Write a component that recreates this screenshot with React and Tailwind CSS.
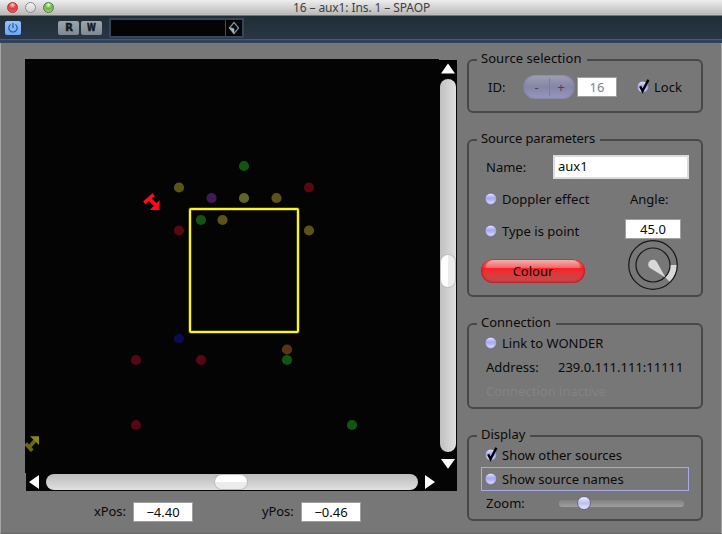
import React from 'react';

const SOURCES = [
  [244, 166, '#115511'], [179, 187.5, '#5a5416'], [309, 187.5, '#560a0c'],
  [211.5, 198, '#421a58'], [244, 198, '#606428'], [276.5, 198, '#5a5416'],
  [201, 220, '#115511'], [222.5, 220, '#5a5416'], [179, 230.5, '#560a0c'],
  [309, 230.5, '#5a5416'], [179, 338.5, '#080c50'], [287, 349.5, '#5c3412'],
  [136, 360, '#560810'], [201, 360, '#560810'], [287, 360, '#115511'],
  [136, 425, '#560810'], [352, 425, '#115511'],
];

function TitleBar() {
  return (
    <div className="flex h-4 shrink-0 bg-linear-to-b from-[#eeeeee] to-[#b8b8b8] border-b border-[#70767a]">
      <div className="flex w-[200px] gap-[7px] pl-[7px] pt-[2px]">
        <span className="h-[11px] w-[11px] rounded-full border border-[#a83838] bg-[radial-gradient(circle_at_50%_20%,#ffd0d0_0%,#e23a3a_45%,#ee6a6a_100%)]" />
        <span className="h-[11px] w-[11px] rounded-full border border-[#8c8c8c] bg-linear-to-b from-[#f2f2f2] to-[#d0d0d0]" />
        <span className="h-[11px] w-[11px] rounded-full border border-[#4c8038] bg-[radial-gradient(circle_at_50%_20%,#e4ffd0_0%,#6cb048_45%,#a8e080_100%)]" />
      </div>
      <div className="w-[323px] text-center text-[12px] leading-[16px] text-[#404040] tracking-[-0.1px]">
        16 – aux1: Ins. 1 – SPAOP
      </div>
    </div>
  );
}

function Toolbar() {
  return (
    <div className="flex h-[27px] shrink-0 items-center border-b-[3px] border-[#30435a] bg-linear-to-b from-[#202e36] to-[#283747] pl-[5px] shadow-[inset_0_-1px_0_#4a5a66]">
      <div className="flex h-[14px] w-4 items-center justify-center rounded-[2px] bg-linear-to-b from-[#94c2ff] to-[#6ea6f4]">
        <svg width="12" height="12" viewBox="0 0 12 12" fill="none" stroke="#234f86" strokeWidth="1.1">
          <path d="M6 1v5M3.6 2.4a4.2 4.2 0 1 0 4.8 0" />
        </svg>
      </div>
      <div className="ml-[37px] flex gap-[2px] font-['DejaVu_Sans'] text-[10px] font-bold leading-[14px] text-[#15191d]">
        <span className="flex h-[14px] w-[21px] items-center justify-center rounded-[2px] bg-linear-to-b from-[#9ca5ae] to-[#7e8994] pl-px [-webkit-text-stroke:0.5px_#15191d]">R</span>
        <span className="flex h-[14px] w-[21px] items-center justify-center rounded-[2px] bg-linear-to-b from-[#9ca5ae] to-[#7e8994]">
          <span className="inline-block scale-x-[0.8] [-webkit-text-stroke:0.5px_#15191d]">W</span>
        </span>
      </div>
      <div className="ml-[7px] flex h-5 w-[135px] border-2 border-[#34475a] bg-[#040404]">
        <div className="w-[115px] border-r border-[#3b4d55]" />
        <svg width="16" height="16" viewBox="0 0 16 16">
          <path d="M8 2.5l4.6 5.5L8 13.5 3.4 8z" fill="none" stroke="#7d929c" strokeWidth="1.2" />
          <path d="M3.4 7.4L8 8.8v4.7z" fill="#a2b7c1" stroke="#a2b7c1" strokeWidth="0.6" />
        </svg>
      </div>
    </div>
  );
}

function Stage() {
  return (
    <svg width="414" height="414" viewBox="25 59 414 414" className="block bg-[#040404]">
      {SOURCES.map(([x, y, c]) => (
        <circle key={x + '-' + y} cx={x} cy={y} r="5.1" fill={c} />
      ))}
      <rect x="190" y="209" width="108" height="123" rx="1" fill="none" stroke="#504e10" strokeWidth="3.4" />
      <rect x="190" y="209" width="108" height="123" rx="1" fill="none" stroke="#fbf42c" strokeWidth="2" />
      <g fill="#ff0c18" stroke="#ff0c18">
        <path d="M144.4 202.8L153.6 194.6M148.8 198.2L156 205.4" strokeWidth="3.8" />
        <path d="M159.5 200V210H149.8z" stroke="none" />
      </g>
      <g fill="#8c8618" stroke="#6c6714">
        <path d="M25.6 443.6L32.3 450.8M29.2 447.2L35.5 440" strokeWidth="3.7" />
        <path d="M30 436.2H39V445z" stroke="none" />
      </g>
    </svg>
  );
}

function VerticalScroll() {
  return (
    <div className="mt-px flex h-[413px] w-[18px] flex-col items-center bg-[#040404]">
      <svg width="18" height="19" viewBox="0 0 18 19" className="shrink-0"><path d="M9 3.5L16 13.5H2z" fill="#fff" /></svg>
      <div className="h-[373px] w-4 rounded-full bg-linear-to-r from-[#c0c0c0] to-[#e0e0e0] pl-px pt-[176px]">
        <div className="h-8 w-[14px] rounded-full bg-linear-to-r from-white from-50% to-[#ececec] to-50% ring-1 ring-[#bcbcbc]" />
      </div>
      <svg width="18" height="20" viewBox="0 0 18 20" className="shrink-0"><path d="M2 7H16L9 16.8z" fill="#fff" /></svg>
    </div>
  );
}

function HorizontalScroll() {
  return (
    <div className="ml-px flex h-[18px] w-[431px] items-center bg-[#040404]">
      <svg width="20" height="18" viewBox="0 0 20 18"><path d="M3 9L13 2V16z" fill="#fff" /></svg>
      <div className="h-4 w-[372px] rounded-full bg-linear-to-b from-[#bcbcbc] to-[#e0e0e0] pl-[169px] pt-px">
        <div className="h-[14px] w-8 rounded-full bg-linear-to-b from-white from-50% to-[#ececec] to-50% ring-1 ring-[#bcbcbc]" />
      </div>
      <svg width="39" height="18" viewBox="0 0 39 18"><path d="M7 2L17 9L7 16z" fill="#fff" /></svg>
    </div>
  );
}

function Group({ title, className, titleClass = '', children }) {
  return (
    <section className={'w-[236px] shrink-0 rounded-[6px] border-2 border-[#484848] ' + className}>
      <div className={'-mt-[12px] ml-2 h-[19px] w-fit bg-[#777777] pl-[4px] pr-[5px] leading-[18px] ' + titleClass}>{title}</div>
      {children}
    </section>
  );
}

function Tick({ checked }) {
  return (
    <svg width="12" height="16" viewBox="0 0 12 16" className="shrink-0 overflow-visible">
      <defs>
        <linearGradient id="led" x1="0" y1="0" x2="0" y2="1">
          <stop offset="0" stopColor="#e4e4ff" />
          <stop offset="0.45" stopColor="#a6a6f2" />
          <stop offset="1" stopColor="#dcdcff" />
        </linearGradient>
      </defs>
      <circle cx="5.8" cy="7.8" r="5.6" fill="url(#led)" stroke="#68687e" strokeWidth="0.6" />
      {checked && <path d="M3.2 7.2L5.6 12L11.4 0.8" fill="none" stroke="#000" strokeWidth="2.4" />}
    </svg>
  );
}

function Field({ className, children }) {
  return (
    <div className={'flex h-5 justify-center border border-[#a0a0a0] bg-white ' + className}>{children}</div>
  );
}

function Dial() {
  return (
    <svg width="52" height="52" viewBox="0 0 52 52">
      <path d="M50 26A24 24 0 0 1 42.97 42.97L38 38A17 17 0 0 0 43 26z" fill="#d8d8d8" />
      <circle cx="26" cy="26" r="24.3" fill="none" stroke="#171717" strokeWidth="1.2" />
      <circle cx="26" cy="26" r="17" fill="none" stroke="#171717" strokeWidth="1.2" />
      <path d="M22.6 28.8A4.7 4.7 0 1 1 30 23.2L38.5 38.5z" fill="#d8d8d8" />
    </svg>
  );
}

export default function App() {
  return (
    <div className="flex h-[534px] w-[722px] flex-col overflow-hidden bg-[#777777] font-['Noto_Sans','Open_Sans',sans-serif] text-[13px] leading-[18px] whitespace-nowrap text-[#0a0a0a]">
      <TitleBar />
      <Toolbar />
      <main className="flex grow border-x border-l-[#a4a4a4] border-r-[#a4a4a4] border-b border-b-[#666666]">
        <div className="ml-6 w-[432px] shrink-0 pt-4">
          <div className="flex"><Stage /><VerticalScroll /></div>
          <HorizontalScroll />
          <div className="flex pt-[11px]">
            <span className="ml-[69px] w-[39px] tracking-[-0.1px]">xPos:</span>
            <Field className="w-[60px]">−4.40</Field>
            <span className="ml-[69px] w-[39px] tracking-[-0.1px]">yPos:</span>
            <Field className="w-[60px]">−0.46</Field>
          </div>
        </div>

        <div className="ml-[10px] pt-4">
          <Group title="Source selection" className="h-[54px]" titleClass="tracking-[0.06px]">
            <div className="mt-[7px] flex items-center">
              <span className="ml-[19px] w-[35px] pb-px">ID:</span>
              <div className="flex h-6 w-[52px] items-center rounded-full bg-linear-to-b from-[#a0a0b8] via-[#8585a6] to-[#9898c0] text-[#44445c] shadow-[inset_0_0_2px_#666688]">
                <span className="w-[27px] border-r border-[#7c7c9c] pl-px text-center">-</span>
                <span className="w-[25px] pr-[3px] text-center">+</span>
              </div>
              <Field className="ml-[2px] w-10 text-[#808080]">16</Field>
              <div className="ml-5 flex items-center gap-[5px] pb-px"><Tick checked /><span>Lock</span></div>
            </div>
          </Group>

          <Group title="Source parameters" className="mt-[26px] h-[158px]" titleClass="tracking-[-0.1px]">
            <div className="mt-[7px] flex items-center">
              <span className="ml-[17px] w-[67px] pb-px">Name:</span>
              <div className="h-6 w-[136px] border-2 border-[#dcdcdc] bg-white pl-[3px] leading-[18px]">aux1</div>
            </div>
            <div className="flex">
              <div className="w-[142px] pt-[11px]">
                <div className="ml-4 flex items-center gap-[5px]"><Tick /><span>Doppler effect</span></div>
                <div className="ml-4 mt-[14px] flex items-center gap-[5px]"><Tick /><span>Type is point</span></div>
                <div className="ml-3 mt-[19px] h-6 w-[104px] rounded-full bg-linear-to-b from-[#ee9090] via-[#fa1e28] via-40% to-[#b84a4e] p-px text-center shadow-[inset_0_0_2px_1px_#c01820]">
                  <div className="mx-1 h-2 rounded-t-full bg-linear-to-b from-[#efb0b0] to-[#f56065]" />
                  <div className="-mt-[6px]">Colour</div>
                </div>
              </div>
              <div className="flex flex-col items-start pt-[11px]">
                <span className="ml-[19px]">Angle:</span>
                <Field className="ml-[14px] mt-[11px] w-14">45.0</Field>
                <div className="ml-4"><Dial /></div>
              </div>
            </div>
          </Group>

          <Group title="Connection" className="mt-[26px] h-[86px]">
            <div className="ml-4 mt-[2px] flex items-center gap-[5px]"><Tick /><span>Link to WONDER</span></div>
            <div className="mt-[6px] flex"><span className="ml-[17px] w-[72px]">Address:</span><span>239.0.111.111:11111</span></div>
            <div className="ml-[17px] mt-[6px] text-[#838383]">Connection inactive</div>
          </Group>

          <Group title="Display" className="mt-[26px] h-[86px]">
            <div className="ml-4 mt-[2px] flex items-center gap-[5px]"><Tick checked /><span>Show other sources</span></div>
            <div className="ml-3 mt-[3px] flex h-6 w-[208px] items-center gap-[5px] border border-[#a9a9e8] pl-[3px]"><Tick /><span>Show source names</span></div>
            <div className="mt-[3px] flex items-center">
              <span className="ml-[17px] w-[73px]">Zoom:</span>
              <div className="flex h-[7px] w-[125px] items-center rounded-full bg-linear-to-b from-[#818181] to-[#a0a0a0] pl-[18px]">
                <span className="h-[14px] w-[14px] rounded-full border border-[#686884] bg-linear-to-b from-[#eeeeff] via-[#bdbdf5] to-[#e8e8ff]" />
              </div>
            </div>
          </Group>
        </div>
      </main>
    </div>
  );
}
